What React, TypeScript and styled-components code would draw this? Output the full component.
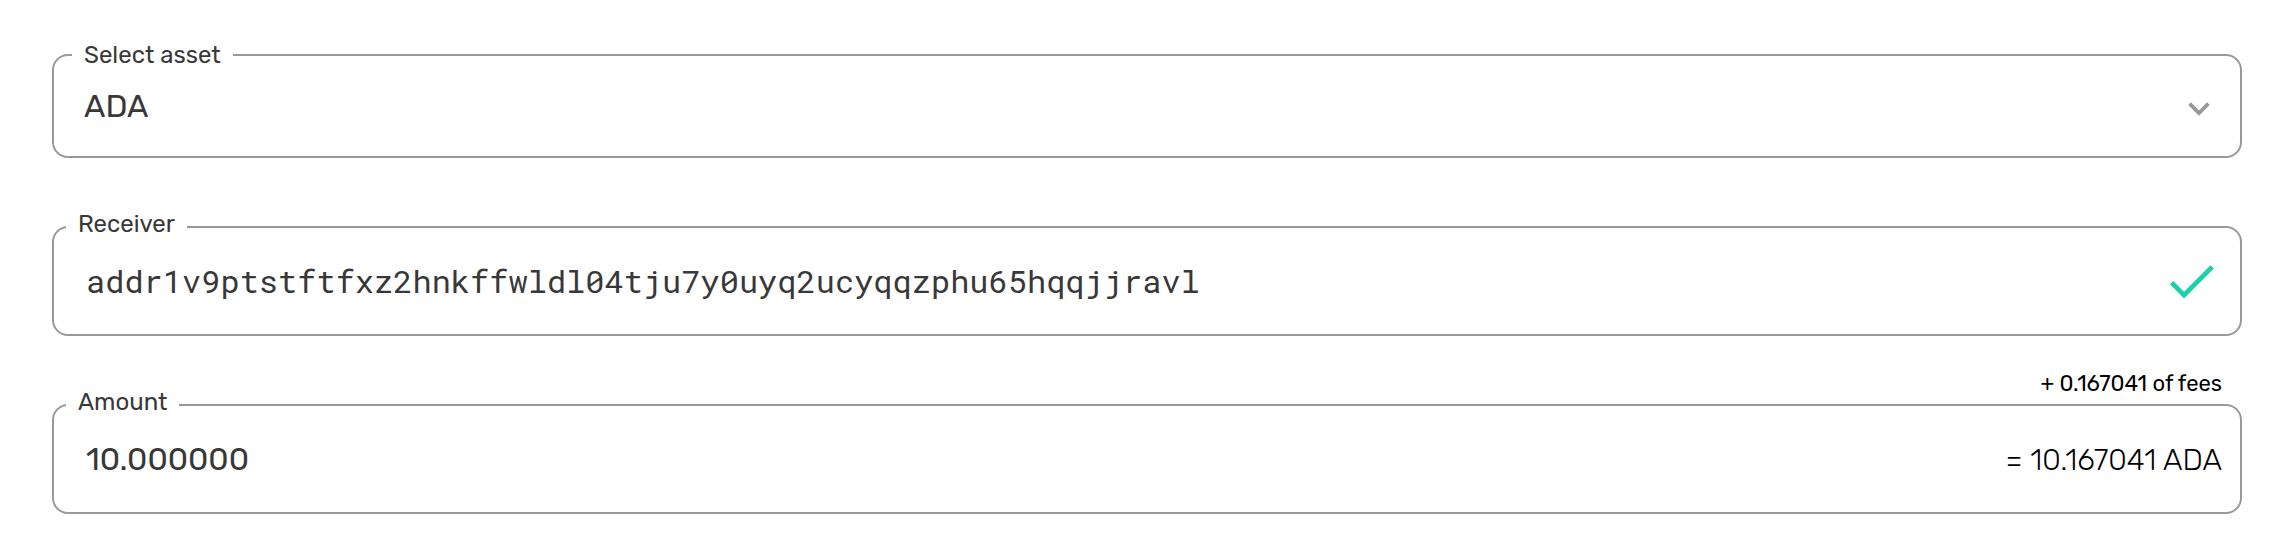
import React from "react";
import styled, { createGlobalStyle } from "styled-components";

const GlobalStyle = createGlobalStyle`
  *, *::before, *::after { box-sizing: border-box; }
  body { margin: 0; background: #fff; color: #383838; font-family: Rubik, Roboto, sans-serif; }
`;

const Form = styled.form`
  display: flex;
  flex-direction: column;
  padding: 54px 46px 38px 52px;
`;

const Field = styled.div<{ $compact?: boolean }>`
  position: relative;
  display: flex;
  align-items: center;
  gap: 20px;
  min-height: ${(p) => (p.$compact ? 104 : 110)}px;
  padding: 0 18px 0 ${(p) => (p.$compact ? 30 : 32)}px;
  border: 2px solid #999;
  border-radius: 16px;
`;

const Spaced = styled.div`
  padding-top: 68px;
`;

const Label = styled.label<{ $inset?: boolean }>`
  position: absolute;
  left: ${(p) => (p.$inset ? 18 : 12)}px;
  top: ${(p) => (p.$inset ? -15 : -18)}px;
  padding: 0 12px;
  background: #fff;
  font-size: 24px;
  line-height: 28px;
`;

const control = `
  flex: 1;
  min-width: 0;
  padding: 0;
  border: 0;
  outline: 0;
  background: transparent;
  color: inherit;
  font-size: 32px;
  line-height: 38px;
  height: 38px;
`;

const Select = styled.select`
  ${control}
  appearance: none;
  font-family: inherit;
`;

const Input = styled.input<{ $mono?: boolean }>`
  ${control}
  font-family: ${(p) => (p.$mono ? '"Roboto Mono", "Liberation Mono", monospace' : "inherit")};
`;

const Icon = styled.svg`
  flex: none;
  fill: none;
`;

const FeeNote = styled.p`
  margin: 0;
  padding: 34px 20px 6px 0;
  color: #000;
  font-size: 22px;
  line-height: 28px;
  text-align: right;
`;

const Total = styled.output`
  padding-top: 2px;
  color: #000;
  font-size: 30px;
  line-height: 38px;
  font-weight: 300;
`;

export default function App() {
  return (
    <>
      <GlobalStyle />
      <Form>
        <Field $compact>
          <Label $inset htmlFor="asset">Select asset</Label>
          <Select id="asset" defaultValue="ADA">
            <option>ADA</option>
          </Select>
          <Icon width="34" height="20" viewBox="0 -6 34 20" aria-hidden="true">
            <path d="M1.6 1.7 11 11.1 20.4 1.7" stroke="#999" strokeWidth="3.8" />
          </Icon>
        </Field>
        <Spaced>
          <Field>
            <Label htmlFor="receiver">Receiver</Label>
            <Input
              id="receiver"
              $mono
              spellCheck={false}
              defaultValue="addr1v9ptstftfxz2hnkffwldl04tju7y0uyq2ucyqqzphu65hqqjjravl"
            />
            <Icon width="52" height="34" viewBox="0 -1 52 34" role="img" aria-label="Valid address">
              <path d="M1.7 17.6 14 30.1 42.2 1.8" stroke="#17d1aa" strokeWidth="4.7" />
            </Icon>
          </Field>
        </Spaced>
        <FeeNote>+ 0.167041 of fees</FeeNote>
        <Field>
          <Label htmlFor="amount">Amount</Label>
          <Input id="amount" inputMode="decimal" defaultValue="10.000000" />
          <Total htmlFor="amount">= 10.167041 ADA</Total>
        </Field>
      </Form>
    </>
  );
}
